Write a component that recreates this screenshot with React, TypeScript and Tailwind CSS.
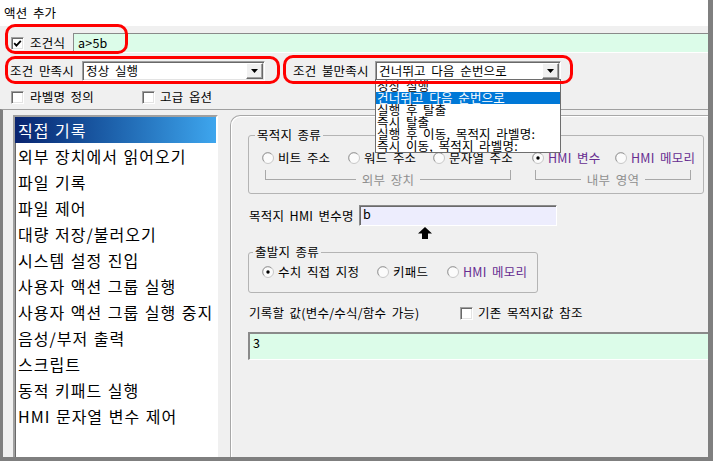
import React from "react";

const Check = ({ checked = false }: { checked?: boolean }) => (
  <span className="inline-flex w-[13px] h-[13px] shrink-0 items-center justify-center bg-white border border-t-[#a0a0a0] border-l-[#a0a0a0] border-r-white border-b-white shadow-[inset_1px_1px_0_#696969,inset_-1px_-1px_0_#e3e3e3]">
    {checked && (
      <svg width="9" height="9" viewBox="0 0 9 9">
        <path d="M1.2 4.2 L3.4 6.6 L7.8 1.8" stroke="#000" strokeWidth="1.8" fill="none" />
      </svg>
    )}
  </span>
);

const Radio = ({ on = false }: { on?: boolean }) => (
  <svg width="12" height="12" viewBox="0 0 12 12" className="shrink-0">
    <circle cx="6" cy="6" r="5.5" fill="#fbfbfb" stroke="#c8c8c8" />
    <path d="M2.2 9.4 A4.8 4.8 0 0 1 9.4 2.2" stroke="#9a9a9a" fill="none" />
    {on && <circle cx="6" cy="6" r="1.7" fill="#000" />}
  </svg>
);

const Combo = ({ text, w }: { text: string; w: string }) => (
  <div
    className={`${w} h-[20px] bg-white flex items-center border border-t-[#a0a0a0] border-l-[#a0a0a0] border-r-white border-b-white shadow-[inset_1px_1px_0_#696969,inset_-1px_-1px_0_#e3e3e3]`}
  >
    <span className="flex-1 pl-[3px] leading-[16px] whitespace-nowrap">{text}</span>
    <span className="w-[17px] h-[16px] mr-[1px] flex items-center justify-center bg-[#f0f0f0] border border-t-white border-l-white border-r-[#696969] border-b-[#696969] shadow-[inset_-1px_-1px_0_#a0a0a0]">
      <svg width="7" height="4" viewBox="0 0 7 4">
        <path d="M0 0 H7 L3.5 4 Z" fill="#000" />
      </svg>
    </span>
  </div>
);

const Bracket = ({ label, w }: { label: string; w: string }) => (
  <div className={w}>
    <div className="h-[9px] border-x border-[#a8a8a8]" />
    <div className="flex items-center h-[1px]">
      <div className="flex-1 h-px bg-[#a8a8a8]" />
      <span className="px-[6px] leading-[14px] text-[#8f8f8f] whitespace-nowrap">{label}</span>
      <div className="flex-1 h-px bg-[#a8a8a8]" />
    </div>
  </div>
);

const RadioItem = ({ label, on = false, purple = false, w }: { label: string; on?: boolean; purple?: boolean; w?: string }) => (
  <div className={`${w ?? ""} flex items-center gap-[4px]`}>
    <Radio on={on} />
    <span className={`leading-[14px] whitespace-nowrap ${purple ? "text-[#672d91]" : "text-black"}`}>{label}</span>
  </div>
);

const listItems = [
  "직접 기록",
  "외부 장치에서 읽어오기",
  "파일 기록",
  "파일 제어",
  "대량 저장/불러오기",
  "시스템 설정 진입",
  "사용자 액션 그룹 실행",
  "사용자 액션 그룹 실행 중지",
  "음성/부저 출력",
  "스크립트",
  "동적 키패드 실행",
  "HMI 문자열 변수 제어",
];

const dropItems = [
  "정상 실행",
  "건너뛰고 다음 순번으로",
  "실행 후 탈출",
  "즉시 탈출",
  "실행 후 이동, 목적지 라벨명:",
  "즉시 이동, 목적지 라벨명:",
];

export default function App() {
  return (
    <div className="relative w-[713px] h-[461px] overflow-hidden flex flex-col bg-[#f0f0f0] border-r-[5px] border-b-[4px] border-[#7f7f7f] font-['Noto_Sans_CJK_KR',sans-serif] text-[12.5px] text-black [word-spacing:2.5px] tracking-[0.2px]">
      {/* title */}
      <div className="h-[26px] shrink-0 bg-white flex items-center pl-[4px] leading-[14px]">액션 추가</div>

      {/* row 1 */}
      <div className="mt-[7px] h-[20px] shrink-0 flex items-center">
        <div className="w-[73px] flex items-center pl-[11px]">
          <Check checked />
          <span className="ml-[6px] leading-[14px]">조건식</span>
        </div>
        <div className="flex-1 h-[20px] flex items-center pl-[4px] bg-[#dcfce9] border-t border-l border-b border-t-[#8a8a8a] border-l-[#8a8a8a] border-b-white leading-[14px]">
          a&gt;5b
        </div>
      </div>

      {/* row 2 */}
      <div className="mt-[8px] h-[20px] shrink-0 flex items-center pl-[10px]">
        <span className="w-[72px] leading-[14px] whitespace-nowrap">조건 만족시</span>
        <Combo text="정상 실행" w="w-[183px]" />
        <span className="ml-[28px] w-[82px] leading-[14px] whitespace-nowrap">조건 불만족시</span>
        <Combo text="건너뛰고 다음 순번으로" w="w-[186px]" />
      </div>

      {/* row 3 */}
      <div className="mt-[9px] h-[14px] shrink-0 flex items-center pl-[11px]">
        <Check />
        <span className="ml-[6px] w-[112px] leading-[14px]">라벨명 정의</span>
        <Check />
        <span className="ml-[5px] leading-[14px]">고급 옵션</span>
      </div>

      {/* lower section */}
      <div className="mt-[5px] flex-1 min-h-0 flex border-t border-t-[#a0a0a0] border-l-[3px] border-l-[#7f7f7f] pl-[10px] pt-[5px] overflow-hidden">
        {/* list */}
        <div className="w-[205px] h-[400px] shrink-0 bg-white border-2 border-t-[#a0a0a0] border-l-[#a0a0a0] border-r-white border-b-white shadow-[inset_1px_1px_0_#696969] text-[16px] [word-spacing:1px] tracking-[1px]">
          {listItems.map((t, i) => (
            <div
              key={t}
              className={`h-[26px] flex items-center pl-[3px] whitespace-nowrap leading-[20px] ${
                i === 0 ? "bg-gradient-to-r from-[#0a2470] to-[#3ea6ee] text-white" : "text-black"
              }`}
            >
              {t}
            </div>
          ))}
        </div>

        {/* right panel */}
        <div className="ml-[12px] w-[520px] h-[420px] shrink-0 border-t border-l border-[#a8a8a8] rounded-tl-[10px] shadow-[inset_1px_1px_0_#ffffff] pl-[17px] pt-[12px]">
          <fieldset className="w-[456px] h-[66px] m-0 p-0 border border-[#b4b4b4] rounded-[3px]">
            <legend className="ml-[6px] px-[2px] leading-[14px]">목적지 종류</legend>
            <div className="mt-[9px] h-[14px] flex items-center pl-[13px]">
              <RadioItem label="비트 주소" w="w-[86px]" />
              <RadioItem label="워드 주소" w="w-[85px]" />
              <RadioItem label="문자열 주소" w="w-[99px]" />
              <RadioItem label="HMI 변수" on purple w="w-[83px]" />
              <RadioItem label="HMI 메모리" purple />
            </div>
            <div className="mt-[5px] flex pl-[16px]">
              <Bracket label="외부 장치" w="w-[246px]" />
              <div className="w-[24px]" />
              <Bracket label="내부 영역" w="w-[156px]" />
            </div>
          </fieldset>

          <div className="mt-[11px] h-[21px] flex items-center">
            <span className="w-[111px] pl-[1px] leading-[14px] whitespace-nowrap">목적지 HMI 변수명</span>
            <div className="w-[198px] h-[21px] pl-[3px] pt-[1px] leading-[14px] bg-[#ededfd] border border-t-[#8a8a8a] border-l-[#8a8a8a] border-r-white border-b-white shadow-[inset_1px_1px_0_#6a6a6a]">
              b
            </div>
          </div>

          <div className="mt-[1px] ml-[170px] h-[12px]">
            <svg width="14" height="12" viewBox="0 0 14 12">
              <path d="M7 0 L14 6.5 L10 6.5 L10 12 L4 12 L4 6.5 L0 6.5 Z" fill="#000" />
            </svg>
          </div>

          <fieldset className="mt-[6px] w-[290px] h-[48px] m-0 p-0 border border-[#b4b4b4] rounded-[3px]">
            <legend className="ml-[4px] px-[2px] leading-[14px]">출발지 종류</legend>
            <div className="mt-[6px] h-[14px] flex items-center pl-[13px]">
              <RadioItem label="수치 직접 지정" on w="w-[115px]" />
              <RadioItem label="키패드" w="w-[70px]" />
              <RadioItem label="HMI 메모리" purple />
            </div>
          </fieldset>

          <div className="mt-[13px] h-[14px] flex items-center">
            <span className="w-[212px] pl-[1px] leading-[14px] whitespace-nowrap">기록할 값(변수/수식/함수 가능)</span>
            <Check />
            <span className="ml-[5px] leading-[14px]">기존 목적지값 참조</span>
          </div>

          <div className="mt-[12px] w-[500px] h-[28px] pl-[3px] pt-[2px] leading-[14px] bg-[#dcfce9] border-t-2 border-l-2 border-b border-t-[#8a8a8a] border-l-[#8a8a8a] border-b-white">
            3
          </div>
        </div>
      </div>

      {/* dropdown overlay */}
      <div className="absolute left-[375px] top-[79px] w-[186px] h-[74px] bg-white border border-[#6e6e6e] overflow-hidden">
        {dropItems.map((t, i) => (
          <div
            key={t}
            className={`h-[12px] pl-[1px] leading-[12px] whitespace-nowrap ${
              i === 1 ? "bg-[#0078d7] text-white" : "text-black"
            }`}
          >
            {t}
          </div>
        ))}
      </div>

      {/* red annotation boxes */}
      <div className="absolute left-[5px] top-[24px] w-[123px] h-[30px] border-[3px] border-[#ff0000] rounded-[10px]" />
      <div className="absolute left-[5px] top-[56px] w-[275px] h-[28px] border-[3px] border-[#ff0000] rounded-[10px]" />
      <div className="absolute left-[283px] top-[55px] w-[290px] h-[29px] border-[3px] border-[#ff0000] rounded-[10px]" />
    </div>
  );
}
